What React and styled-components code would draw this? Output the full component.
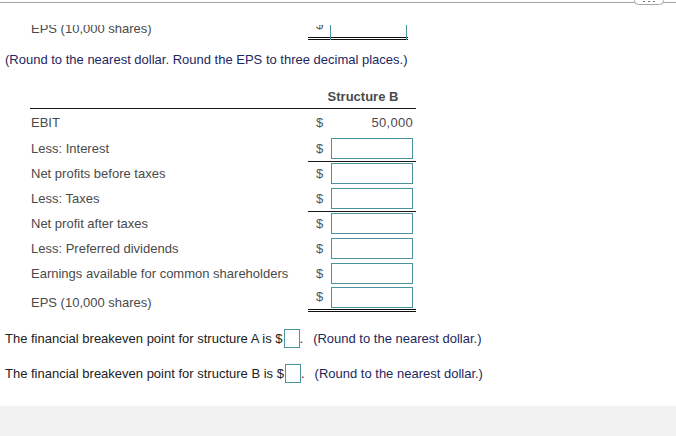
import React from 'react'
import styled, { createGlobalStyle } from 'styled-components';

const GlobalStyle = createGlobalStyle`
    html, body {
        margin: 0;
        padding: 0;
        background: #fff;
    }
    body {
        font-family: "Liberation Sans", Arial, sans-serif;
        font-size: 13px;
        color: #4a4a4a;
        overflow: hidden;
    }
`;

const rows = [
    { label: 'EBIT', value: '50,000', first: true },
    { label: 'Less: Interest', line: 'single' },
    { label: 'Net profits before taxes' },
    { label: 'Less: Taxes', line: 'single' },
    { label: 'Net profit after taxes' },
    { label: 'Less: Preferred dividends' },
    { label: 'Earnings available for common shareholders' },
    { label: 'EPS (10,000 shares)', line: 'double', last: true },
];

function App() {
    return (
        <Page>
            <GlobalStyle />
            <TopBar>
                <MorePill>
                    <Dot /><Dot /><Dot />
                </MorePill>
            </TopBar>

            {/* bottom of the Structure A table, scrolled mostly out of view */}
            <PrevRow>
                <PrevLabel>EPS (10,000 shares)</PrevLabel>
                <PrevCells>
                    <PrevDollar>$</PrevDollar>
                    <PrevInput />
                </PrevCells>
            </PrevRow>

            <Note>(Round to the nearest dollar. Round the EPS to three decimal places.)</Note>

            <Table>
                <Header>
                    <span />
                    <HeaderTitle>Structure B</HeaderTitle>
                </Header>
                {rows.map((r) => (
                    <Row key={r.label} $last={r.last} $first={r.first}>
                        <Label $last={r.last}>{r.label}</Label>
                        <Cells $line={r.line}>
                            <Dollar $last={r.last}>$</Dollar>
                            {r.value ? <Value>{r.value}</Value> : <AnswerBox />}
                        </Cells>
                    </Row>
                ))}
            </Table>

            <Questions>
                <Sentence>
                    The financial breakeven point for structure A is $<SmallBox />.
                    <Hint>(Round to the nearest dollar.)</Hint>
                </Sentence>
                <Sentence>
                    The financial breakeven point for structure B is $<SmallBox />.
                    <Hint>(Round to the nearest dollar.)</Hint>
                </Sentence>
            </Questions>

            <Footer />
        </Page>
    )
}

const Page = styled.div`
    width: 676px;
    height: 436px;
    display: flex;
    flex-direction: column;
`;

const TopBar = styled.div`
    position: relative;
    height: 2px;
    border-bottom: 1px solid #a3a3a3;
`;

const MorePill = styled.div`
    position: absolute;
    left: 634px;
    top: -4px;
    width: 30px;
    height: 9px;
    border: 1px solid #a8a8a8;
    border-radius: 5px;
    background: #fff;
    display: flex;
    justify-content: center;
    align-items: center;
    gap: 3px;
    padding-top: 2px;
    box-sizing: border-box;
`;

const Dot = styled.span`
    width: 2px;
    height: 1px;
    background: #777;
`;

const PrevRow = styled.div`
    margin: 22px 0 0 30px;
    width: 378px;
    height: 15px;
    overflow: hidden;
    display: grid;
    grid-template-columns: 278px 1fr;
    grid-template-rows: 15px;
    align-items: end;
`;

const PrevLabel = styled.div`
    padding-left: 1px;
    line-height: 15px;
    margin-bottom: 4px;
    white-space: nowrap;
`;

const PrevCells = styled.div`
    height: 15px;
    box-sizing: border-box;
    display: flex;
    align-items: flex-end;
    padding-left: 2px;
    border-bottom: 3px double #111;
`;

const PrevDollar = styled.div`
    flex-shrink: 0;
    width: 19px;
    text-align: center;
    color: #555;
    line-height: 15px;
    margin-bottom: 5px;
`;

const PrevInput = styled.div`
    flex-shrink: 0;
    width: 77px;
    height: 19px;
    border: 1px solid #4c93a0;
    box-sizing: border-box;
    margin: 0 0 -4px 1px;
`;

const Note = styled.div`
    margin: 12px 0 0 5px;
    color: #1d2760;
    line-height: 15px;
`;

const Table = styled.div`
    margin: 22px 0 0 30px;
    width: 386px;
`;

const Header = styled.div`
    display: grid;
    grid-template-columns: 278px 1fr;
    height: 19px;
    border-bottom: 1px solid #1a1a1a;
`;

const HeaderTitle = styled.div`
    font-weight: bold;
    text-align: center;
    color: #4a4a4a;
    line-height: 15px;
    padding-left: 2px;
`;

const Row = styled.div`
    display: grid;
    grid-template-columns: 278px 1fr;
    height: ${(p) => (p.$last ? '26px' : p.$first ? '27px' : '25px')};
    align-items: ${(p) => (p.$last ? 'end' : 'center')};
`;

const Label = styled.div`
    padding-left: 1px;
    line-height: 15px;
    padding-bottom: ${(p) => (p.$last ? '2px' : '0')};
`;

const Cells = styled.div`
    height: 100%;
    box-sizing: border-box;
    display: flex;
    align-items: center;
    padding-left: 2px;
    border-bottom: ${(p) =>
        p.$line === 'single' ? '1px solid #1a1a1a' :
        p.$line === 'double' ? '3px double #111' : '0'};
    margin-bottom: ${(p) => (p.$line === 'single' ? '-1px' : '0')};
`;

const Dollar = styled.div`
    width: 19px;
    text-align: center;
    color: #555;
    line-height: 15px;
    align-self: ${(p) => (p.$last ? 'flex-start' : 'center')};
    margin-top: ${(p) => (p.$last ? '3px' : '0')};
`;

const AnswerBox = styled.div`
    width: 82px;
    height: 21px;
    box-sizing: border-box;
    border: 1px solid #4c93a0;
    background: #fff;
    margin-left: 2px;
`;

const Value = styled.div`
    flex: 1;
    text-align: right;
    padding-right: 3px;
    letter-spacing: 0.3px;
`;

const Questions = styled.div`
    margin: 2px 0 0 5px;
`;

const Sentence = styled.div`
    margin-top: 13px;
    height: 22px;
    display: flex;
    align-items: center;
    color: #222;
`;

const SmallBox = styled.span`
    display: inline-block;
    width: 16px;
    height: 19px;
    box-sizing: border-box;
    border: 1px solid #4c93a0;
    margin-left: 1px;
`;

const Hint = styled.span`
    color: #1d2760;
    margin-left: 10px;
`;

const Footer = styled.div`
    margin-top: auto;
    height: 30px;
    background: #f2f2f2;
`;

export default App;
